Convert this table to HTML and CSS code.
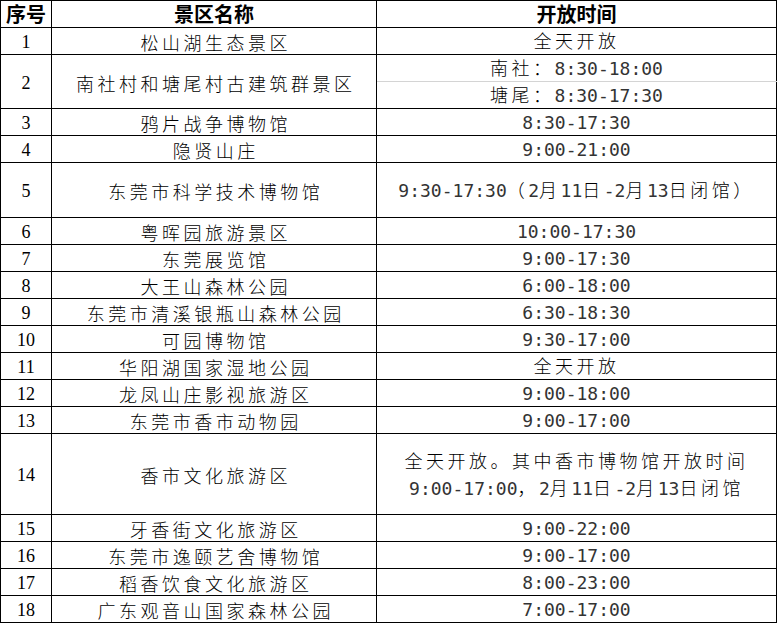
FILE: index.html
```html
<!DOCTYPE html>
<html lang="zh-CN">
<head>
<meta charset="utf-8">
<title>景区开放时间</title>
<link rel="stylesheet" href="styles.css">
</head>
<body>
<table class="grid">
<colgroup><col class="c1"><col class="c2"><col class="c3"></colgroup>
<tr class="head"><th>序号</th><th>景区名称</th><th>开放时间</th></tr>
<tr><td class="n">1</td><td class="s">松山湖生态景区</td><td class="t"><span class="c">全天开放</span></td></tr>
<tr><td class="n" rowspan="2">2</td><td class="s" rowspan="2">南社村和塘尾村古建筑群景区</td><td class="t top"><span class="c">南社：</span>8:30-18:00</td></tr>
<tr><td class="t bot"><span class="c">塘尾：</span>8:30-17:30</td></tr>
<tr><td class="n">3</td><td class="s">鸦片战争博物馆</td><td class="t">8:30-17:30</td></tr>
<tr><td class="n">4</td><td class="s">隐贤山庄</td><td class="t">9:00-21:00</td></tr>
<tr class="tall"><td class="n">5</td><td class="s">东莞市科学技术博物馆</td><td class="t">9:30-17:30<span class="c">（</span>2<span class="c">月</span>11<span class="c">日</span>-2<span class="c">月</span>13<span class="c">日闭馆）</span></td></tr>
<tr class="short"><td class="n">6</td><td class="s">粤晖园旅游景区</td><td class="t">10:00-17:30</td></tr>
<tr><td class="n">7</td><td class="s">东莞展览馆</td><td class="t">9:00-17:30</td></tr>
<tr><td class="n">8</td><td class="s">大王山森林公园</td><td class="t">6:00-18:00</td></tr>
<tr><td class="n">9</td><td class="s">东莞市清溪银瓶山森林公园</td><td class="t">6:30-18:30</td></tr>
<tr><td class="n">10</td><td class="s">可园博物馆</td><td class="t">9:30-17:00</td></tr>
<tr><td class="n">11</td><td class="s">华阳湖国家湿地公园</td><td class="t"><span class="c">全天开放</span></td></tr>
<tr><td class="n">12</td><td class="s">龙凤山庄影视旅游区</td><td class="t">9:00-18:00</td></tr>
<tr><td class="n">13</td><td class="s">东莞市香市动物园</td><td class="t">9:00-17:00</td></tr>
<tr class="big"><td class="n">14</td><td class="s">香市文化旅游区</td><td class="t two"><span class="c">全天开放。其中香市博物馆开放时间</span><br>9:00-17:00<span class="c">，</span>2<span class="c">月</span>11<span class="c">日</span>-2<span class="c">月</span>13<span class="c">日闭馆</span></td></tr>
<tr><td class="n">15</td><td class="s">牙香街文化旅游区</td><td class="t">9:00-22:00</td></tr>
<tr><td class="n">16</td><td class="s">东莞市逸颐艺舍博物馆</td><td class="t">9:00-17:00</td></tr>
<tr><td class="n">17</td><td class="s">稻香饮食文化旅游区</td><td class="t">8:00-23:00</td></tr>
<tr><td class="n">18</td><td class="s">广东观音山国家森林公园</td><td class="t">7:00-17:00</td></tr>
</table>
</body>
</html>
```
FILE: styles.css
```css
html, body {
  margin: 0;
  padding: 0;
  background: #fff;
}
.grid {
  border-collapse: collapse;
  table-layout: fixed;
  width: 776px;
  color: #000;
}
.c1 { width: 51px; }
.c2 { width: 325px; }
.c3 { width: 400px; }
.grid tr { height: 27px; }
.grid tr.tall { height: 55px; }
.grid tr.short { height: 26px; }
.grid tr.big { height: 81px; }
.grid th, .grid td {
  border: 1px solid #000;
  padding: 0;
  text-align: center;
  vertical-align: middle;
  line-height: 24px;
  white-space: nowrap;
}
.head th {
  font-family: "Noto Sans CJK SC", sans-serif;
  font-weight: 700;
  font-size: 20px;
}
.n {
  font-family: "Liberation Serif", serif;
  font-size: 18px;
  padding-top: 2px !important;
}
.s {
  font-family: "Noto Sans CJK SC", sans-serif;
  font-size: 18px;
  font-weight: 300;
  letter-spacing: 3.5px;
  padding-left: 3.5px !important;
  padding-top: 2px !important;
}
.t {
  font-family: "DejaVu Sans Mono", monospace;
  font-size: 18px;
  font-weight: 400;
  letter-spacing: 0;
  padding-top: 2px !important;
  color: #333;
}
.grid td.two { line-height: 27px; }
.c {
  font-family: "Noto Sans CJK SC", sans-serif;
  font-size: 18px;
  font-weight: 300;
  letter-spacing: 3.5px;
  line-height: 1;
  color: #000;
}
.grid td.top { border-bottom-color: #d4d4d4; }
.grid td.bot { border-top-color: #d4d4d4; }
```
